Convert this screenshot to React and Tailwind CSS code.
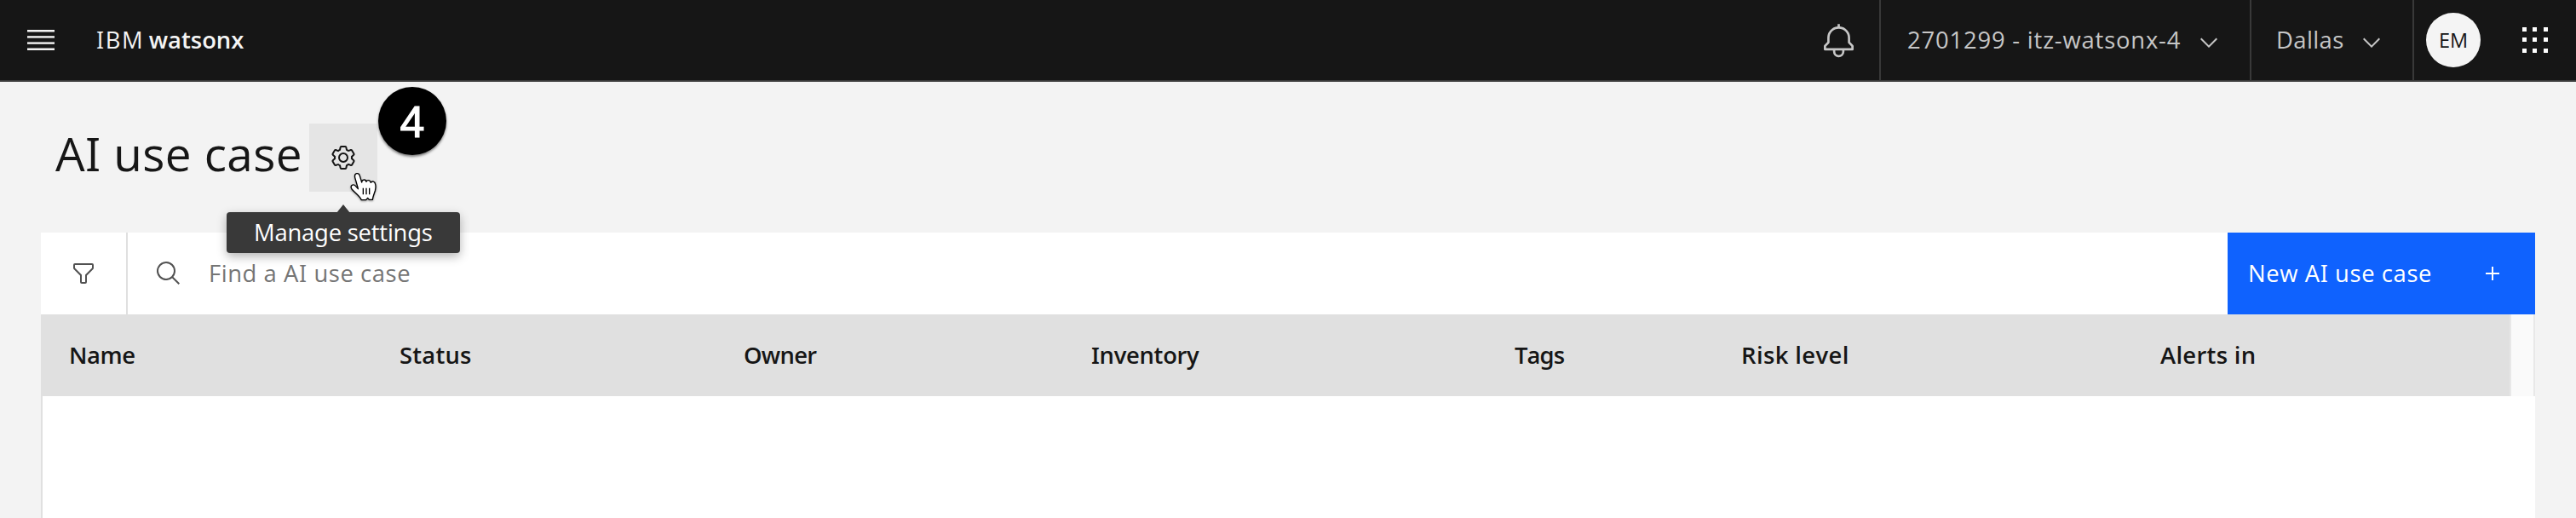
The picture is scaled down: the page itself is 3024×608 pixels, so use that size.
function Icon({ children, className }) {
  return (
    <svg viewBox="0 0 32 32" fill="currentColor" aria-hidden="true" className={className}>
      {children}
    </svg>
  );
}

function ChevronDown() {
  return (
    <Icon className="mt-[5px] size-8 shrink-0">
      <path d="M16 22 6 12l1.4-1.4 8.6 8.6 8.6-8.6L26 12z" />
    </Icon>
  );
}

function MenuIcon() {
  return (
    <svg viewBox="0 0 32 24" fill="#f4f4f4" aria-hidden="true" className="h-6 w-8 shrink-0">
      <rect y="0" width="32" height="2.5" />
      <rect y="7.2" width="32" height="2.4" />
      <rect y="14.4" width="32" height="2.4" />
      <rect y="21.5" width="32" height="2.5" />
    </svg>
  );
}

function AppSwitcher() {
  const xs = [0, 12, 25];
  return (
    <svg viewBox="0 0 30 30" fill="#ffffff" aria-hidden="true" className="size-[30px] shrink-0">
      {xs.map((y) => xs.map((x) => <rect key={`${x}-${y}`} x={x} y={y} width="5" height="5" />))}
    </svg>
  );
}

function HandCursor() {
  return (
    <svg
      viewBox="0 0 96 104"
      aria-hidden="true"
      className="absolute top-[57px] left-12 z-20 h-[34.7px] w-8 drop-shadow-[0_1px_1px_rgba(0,0,0,0.4)]"
    >
      <path
        d="M27 54 L17 19 C14 3 30 0 34 13 L41 36 C41 25 55 24 57 34 C60 26 71 28 73 37 C77 30 88 33 89 43 C91 50 90 58 88 66 C85 76 81 82 79 97 L67 97 L62 91 L56 98 L40 98 C34 84 18 74 6 60 C-2 46 12 40 20 50 L28 59 Z"
        fill="#fff"
        stroke="#000"
        strokeWidth="4"
        strokeLinejoin="round"
      />
      <path d="M46 56v23M57 56v23M68 56v23" stroke="#000" strokeWidth="4" />
    </svg>
  );
}

const columns = [
  { label: "Name", cell: "w-[387px] pl-[31px] tracking-[-0.4px]" },
  { label: "Status", cell: "w-[404px] pl-[32px] tracking-[0.2px]" },
  { label: "Owner", cell: "w-[409px] pl-[32px] tracking-[-0.7px]" },
  { label: "Inventory", cell: "w-[496px] pl-[31px] tracking-[-0.3px]" },
  { label: "Tags", cell: "w-[268px] pl-[32px] tracking-[-0.9px]" },
  { label: "Risk level", cell: "w-[491px] pl-[30px] tracking-[0.4px]" },
  { label: "Alerts in", cell: "flex-1 pl-[31px] tracking-[0.3px]" },
];

function TopBar() {
  return (
    <header className="flex h-24 shrink-0 items-stretch border-b-2 border-[#393939] bg-[#161616] text-[#c6c6c6]">
      <div className="flex flex-1 items-center pl-8 text-[#f4f4f4]">
        <MenuIcon />
        <span className="ml-[49px] tracking-[1.6px]">IBM</span>
        <span className="ml-[5.5px] font-semibold">watsonx</span>
      </div>
      <button className="flex w-[69px] items-center">
        <Icon className="mt-[2px] size-[43px]">
          <path d="M28.707 19.293 26 16.586V13a10.014 10.014 0 0 0-9-9.95V1h-2v2.05A10.014 10.014 0 0 0 6 13v3.586l-2.707 2.707A1 1 0 0 0 3 20v3a1 1 0 0 0 1 1h7v.777a5.152 5.152 0 0 0 4.5 5.199A5.006 5.006 0 0 0 21 25v-1h7a1 1 0 0 0 1-1v-3a1 1 0 0 0-.293-.707ZM19 25a3 3 0 0 1-6 0v-1h6Zm8-3H5v-1.586l2.707-2.707A1 1 0 0 0 8 17v-4a8 8 0 0 1 16 0v4a1 1 0 0 0 .293.707L27 20.414Z" />
        </Icon>
      </button>
      <button className="flex w-[435px] items-center justify-between border-l-2 border-[#393939] pr-8 pl-[31px]">
        <span className="tracking-[0.82px]">2701299 - itz-watsonx-4</span>
        <ChevronDown />
      </button>
      <button className="flex w-[191px] items-center justify-between border-l-2 border-[#393939] pr-8 pl-[29px]">
        <span className="tracking-[0.4px]">Dallas</span>
        <ChevronDown />
      </button>
      <div className="flex w-[192px] items-center border-l-2 border-[#393939] pl-[14px]">
        <div className="flex size-16 items-center justify-center rounded-full bg-[#f4f4f4] text-[23.5px] text-[#161616]">
          EM
        </div>
        <div className="ml-[49px]">
          <AppSwitcher />
        </div>
      </div>
    </header>
  );
}

function PageHeading() {
  return (
    <div className="relative z-10 flex h-[177px] shrink-0 items-start pt-[49px]">
      <h1 className="w-[363px] pl-[65px] text-[54.8px] leading-[70px] tracking-[0.4px] whitespace-nowrap">AI use case</h1>
      <div className="relative">
        <button className="flex size-20 items-center justify-center bg-[#e5e5e5]">
          <Icon className="size-8">
            <path d="M27 16.76v-1.53l1.92-1.68A2 2 0 0 0 29.3 11l-2.36-4a2 2 0 0 0-1.73-1 2 2 0 0 0-.64.1l-2.43.82a11.35 11.35 0 0 0-1.31-.75l-.51-2.52a2 2 0 0 0-2-1.61h-4.68a2 2 0 0 0-2 1.61l-.51 2.52a11.48 11.48 0 0 0-1.32.75l-2.38-.86A2 2 0 0 0 6.79 6a2 2 0 0 0-1.73 1L2.7 11a2 2 0 0 0 .41 2.51L5 15.24v1.53l-1.89 1.68A2 2 0 0 0 2.7 21l2.36 4a2 2 0 0 0 1.73 1 2 2 0 0 0 .64-.1l2.43-.82a11.35 11.35 0 0 0 1.31.75l.51 2.52a2 2 0 0 0 2 1.61h4.72a2 2 0 0 0 2-1.61l.51-2.52a11.48 11.48 0 0 0 1.32-.75l2.42.82a2 2 0 0 0 .64.1 2 2 0 0 0 1.73-1l2.28-4a2 2 0 0 0-.41-2.51ZM25.21 24l-3.43-1.16a8.86 8.86 0 0 1-2.71 1.57L18.36 28h-4.72l-.71-3.55a9.36 9.36 0 0 1-2.7-1.57L6.79 24l-2.36-4 2.72-2.4a8.9 8.9 0 0 1 0-3.13L4.43 12l2.36-4 3.43 1.16a8.86 8.86 0 0 1 2.71-1.57L13.64 4h4.72l.71 3.55a9.36 9.36 0 0 1 2.7 1.57L25.21 8l2.36 4-2.72 2.4a8.9 8.9 0 0 1 0 3.13L27.57 20Z" />
            <path d="M16 22a6 6 0 1 1 6-6 5.94 5.94 0 0 1-6 6Zm0-10a3.91 3.91 0 0 0-4 4 3.91 3.91 0 0 0 4 4 3.91 3.91 0 0 0 4-4 3.91 3.91 0 0 0-4-4Z" />
          </Icon>
        </button>
        <div className="absolute top-[104px] -left-[97px] flex h-12 w-[274px] items-center rounded-[4px] bg-[#393939] pl-[32px] text-white shadow-[0_4px_12px_rgba(0,0,0,0.3)]">
          <svg viewBox="0 0 16 10" aria-hidden="true" className="absolute -top-[9.5px] left-[129px] h-[10px] w-4">
            <path d="M0 10 8 0l8 10z" fill="#393939" />
          </svg>
          <span className="tracking-[-0.2px] whitespace-nowrap">Manage settings</span>
        </div>
        <div className="absolute -top-[43px] left-[81px] flex size-20 items-center justify-center rounded-full bg-black pt-[2px] font-['Liberation_Sans',Arial,sans-serif] text-[52px] leading-none text-white shadow-[0_2px_3px_rgba(0,0,0,0.5)] [-webkit-text-stroke:1.2px_white]">
          4
        </div>
        <HandCursor />
      </div>
    </div>
  );
}

function Toolbar() {
  return (
    <div className="flex h-24 shrink-0 bg-white text-[#525252]">
      <button className="flex w-[102px] items-center justify-center border-r-2 border-[#e0e0e0]">
        <Icon className="size-8">
          <path d="M18 28h-4a2 2 0 0 1-2-2v-7.59L4.59 11A2 2 0 0 1 4 9.59V6a2 2 0 0 1 2-2h20a2 2 0 0 1 2 2v3.59a2 2 0 0 1-.59 1.41L20 18.41V26a2 2 0 0 1-2 2ZM6 6v3.59l8 8V26h4v-8.41l8-8V6Z" />
        </Icon>
      </button>
      <div className="flex flex-1 items-center pl-8">
        <Icon className="size-8">
          <path d="m29 27.586-7.552-7.552a11.018 11.018 0 1 0-1.414 1.414L27.586 29ZM4 13a9 9 0 1 1 9 9 9.01 9.01 0 0 1-9-9Z" />
        </Icon>
        <span className="ml-[31px] tracking-[0.58px] text-[#757575]">Find a AI use case</span>
      </div>
      <button className="flex w-[361px] items-center justify-between bg-[#0f62fe] pr-[34px] pl-6 text-white">
        <span className="tracking-[0.6px]">New AI use case</span>
        <Icon className="size-8">
          <path d="M17 15V8h-2v7H8v2h7v7h2v-7h7v-2z" />
        </Icon>
      </button>
    </div>
  );
}

function UseCaseTable() {
  return (
    <div className="flex flex-1 flex-col">
      <div className="flex h-24 shrink-0">
        <div className="flex flex-1 items-center bg-[#e0e0e0] pl-[2px] font-semibold">
          {columns.map((column) => (
            <div key={column.label} className={`${column.cell} whitespace-nowrap`}>
              {column.label}
            </div>
          ))}
        </div>
        <div className="w-[30px] border-x-2 border-[#e8e8e8] bg-[#fafafa]" />
      </div>
      <div className="flex-1 border-l-2 border-[#e0e0e0] bg-white" />
    </div>
  );
}

export default function App() {
  return (
    <div className="flex h-[608px] w-[3024px] flex-col overflow-hidden bg-[#f3f3f3] font-['Open_Sans','Noto_Sans',sans-serif] text-[27.4px] leading-9 text-[#161616] [font-feature-settings:'ss01']">
      <TopBar />
      <PageHeading />
      <main className="mx-12 flex flex-1 flex-col">
        <Toolbar />
        <UseCaseTable />
      </main>
    </div>
  );
}
